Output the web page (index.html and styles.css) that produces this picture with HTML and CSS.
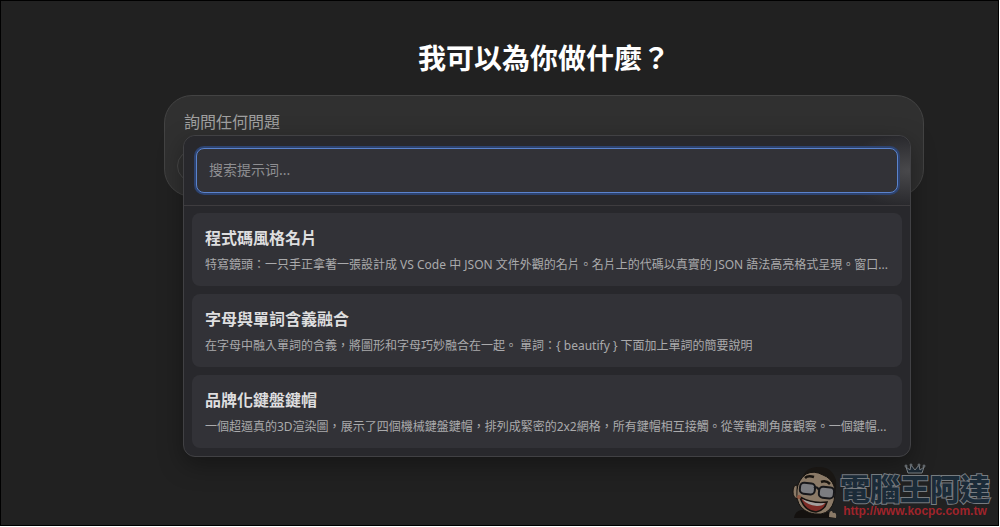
FILE: index.html
```html
<!DOCTYPE html>
<html lang="zh-Hant">
<head>
<meta charset="utf-8">
<meta name="viewport" content="width=device-width, initial-scale=1">
<title>我可以為你做什麼？</title>
<link rel="stylesheet" href="styles.css">
</head>
<body>
<main class="page">
  <section class="chat">
    <h1 class="heading">我可以為你做什麼？</h1>
    <div class="composer">
      <textarea class="composer-input" rows="1" aria-label="詢問任何問題" placeholder="詢問任何問題"></textarea>
      <button class="composer-button" type="button" aria-label="更多"></button>
      <div class="prompts">
        <div class="prompts-search">
          <input class="search-input" type="text" aria-label="搜索提示词" placeholder="搜索提示词...">
        </div>
        <ul class="prompt-list">
          <li><button class="prompt" type="button">
            <span class="prompt-title">程式碼風格名片</span>
            <span class="prompt-text">特寫鏡頭：一只手正拿著一張設計成 VS Code 中 JSON 文件外觀的名片。名片上的代碼以真實的 JSON 語法高亮格式呈現。窗口...</span>
          </button></li>
          <li><button class="prompt" type="button">
            <span class="prompt-title">字母與單詞含義融合</span>
            <span class="prompt-text">在字母中融入單詞的含義，將圖形和字母巧妙融合在一起。 單詞：{ beautify } 下面加上單詞的簡要說明</span>
          </button></li>
          <li><button class="prompt" type="button">
            <span class="prompt-title">品牌化鍵盤鍵帽</span>
            <span class="prompt-text">一個超逼真的3D渲染圖，展示了四個機械鍵盤鍵帽，排列成緊密的2x2網格，所有鍵帽相互接觸。從等軸測角度觀察。一個鍵帽...</span>
          </button></li>
        </ul>
      </div>
    </div>
  </section>
  <div class="watermark">
    <svg class="mascot" viewBox="0 0 48 54" aria-hidden="true">
      <path d="M2 53q1-7 7-8l22 1q10 1 12 7z" fill="#14110f"/>
      <path d="M10 16Q11 3 25 2q15-1 19 13 1 8-2 17l-4-3-4-15-20-4z" fill="#191613"/>
      <path d="M5 20q-4 0-4 7 0 6 5 7z" fill="#8b7a67" stroke="#15120f"/>
      <path d="M14 9q8-4 17 1 8 3 11 11 2 8 0 15-3 11-13 13-13 1-20-7-5-6-4-17 1-10 9-16z" fill="#8b7a67" stroke="#15120f"/>
      <path d="M13 13q3-3 9-1M29 17q5-2 9 2" fill="none" stroke="#17130f" stroke-width="2.5"/>
      <rect x="8" y="18" width="15" height="11" rx="4" fill="#7b7c80" stroke="#17171a" stroke-width="2" transform="rotate(6 15 23)"/>
      <rect x="27" y="22" width="15" height="11" rx="4" fill="#7b7c80" stroke="#17171a" stroke-width="2" transform="rotate(6 34 27)"/>
      <path d="M22 23q3-2 5 2" fill="none" stroke="#17171a" stroke-width="2"/>
      <path d="M8 32q12 7 27 5-2 8-11 10-12-1-16-15z" fill="#7d2b25" stroke="#15120f" stroke-width="1.5"/>
      <path d="M10 34q10 5 23 4-2 3-8 3-10-1-15-7z" fill="#a3a19e"/>
      <circle cx="7" cy="32" r="2" fill="#945943"/>
      <path d="M37 52q0-7 3-6l1 2q4-1 3 5z" fill="#8b7a67"/>
    </svg>
    <div class="brand">
      <span class="brand-name">電腦王阿達</span>
      <a class="brand-link" href="http://www.kocpc.com.tw">http://www.kocpc.com.tw</a>
      <svg class="crown" viewBox="0 0 22 12" aria-hidden="true">
        <path d="M4 10 2 4l4 3 1-5 4 5 4-5 1 5 4-3-2 6z" fill="#1b2833" stroke="#777c80" stroke-width="1"/>
        <g fill="#1b2833" stroke="#777c80"><circle cx="2" cy="3" r="1"/><circle cx="7" cy="2" r="1"/><circle cx="15" cy="2" r="1"/><circle cx="20" cy="3" r="1"/></g>
      </svg>
    </div>
  </div>
</main>
</body>
</html>
```
FILE: styles.css
```css
* { box-sizing: border-box; }
body {
  margin: 0;
  background: #fff;
  color: #ececec;
  font-family: "Noto Sans", "Noto Sans CJK TC", sans-serif;
}
button, input, textarea { font: inherit; color: inherit; }
.page {
  position: relative;
  min-height: calc(100vh - 1px);
  margin-right: 1px;
  padding: 35px 74px 8px 163px;
  border: 1px solid #000;
  background: #212121;
  overflow: hidden;
}
.chat { display: flex; flex-direction: column; gap: 17px; }
.heading {
  margin: 0;
  color: #fff;
  font-family: "Noto Sans CJK TC", sans-serif;
  font-size: 28px;
  line-height: 42px;
  font-weight: 700;
  text-align: center;
}
.composer {
  position: relative;
  display: flex;
  flex-direction: column;
  align-items: flex-start;
  gap: 16px;
  padding: 14px 12px;
  border: 1px solid #434343;
  border-radius: 28px;
  background: #303030;
}
.composer-input {
  width: 100%;
  height: 24px;
  padding: 0 7px;
  border: 0;
  outline: 0;
  resize: none;
  overflow: hidden;
  background: transparent;
  font-size: 16px;
  line-height: 24px;
}
.composer-input::placeholder { color: #a0a0a0; opacity: 1; }
.composer-button {
  width: 32px;
  height: 32px;
  border: 1px solid #484848;
  border-radius: 50%;
  background: transparent;
}
.prompts {
  position: absolute;
  top: 39px;
  left: 18px;
  right: 12px;
  border: 1px solid #414144;
  border-radius: 12px;
  background: #28282c;
  box-shadow: 0 8px 24px rgba(0, 0, 0, 0.35);
}
.prompts-search {
  padding: 12px;
  border-bottom: 1px solid #3e3c3f;
  border-radius: 12px 12px 0 0;
  background: radial-gradient(ellipse 72px 36px at 100% 50%, #49494c, #28282c);
}
.search-input {
  display: block;
  width: 100%;
  height: 45px;
  padding: 0 12px 2px;
  border: 1px solid #5b83cc;
  border-radius: 8px;
  outline: 0;
  background: #323237;
  box-shadow: 0 0 0 2px #2d4370;
  font-size: 14px;
}
.search-input::placeholder { color: #8e8e91; opacity: 1; }
.prompt-list {
  display: flex;
  flex-direction: column;
  gap: 8px;
  margin: 0;
  padding: 7px 8px 8px;
  list-style: none;
}
.prompt {
  display: flex;
  flex-direction: column;
  gap: 5px;
  width: 100%;
  padding: 13px 13px 11px;
  border: 0;
  border-radius: 8px;
  background: #323237;
  text-align: left;
}
.prompt-title { color: #dededf; font-size: 16px; line-height: 24px; font-weight: 700; }
.prompt-text {
  width: 100%;
  overflow: hidden;
  color: #aaaaac;
  font-size: 12px;
  line-height: 20px;
  white-space: nowrap;
  text-overflow: ellipsis;
}
.watermark {
  position: absolute;
  right: 8px;
  bottom: 6px;
  display: flex;
  align-items: flex-end;
}
.mascot { width: 48px; height: 54px; }
.brand { position: relative; display: flex; flex-direction: column; align-items: center; }
.brand-name {
  color: #1b2b38;
  font-family: "Noto Sans CJK TC", sans-serif;
  font-size: 30px;
  line-height: 32px;
  font-weight: 900;
  -webkit-text-stroke: 2px #777c80;
  paint-order: stroke fill;
}
.brand-link {
  color: #a0242b;
  font-family: "Liberation Sans", Arial, sans-serif;
  font-size: 12px;
  line-height: 16px;
  font-weight: 700;
  text-decoration: none;
}
.crown { position: absolute; top: -8px; left: 64px; width: 22px; height: 12px; }
```
